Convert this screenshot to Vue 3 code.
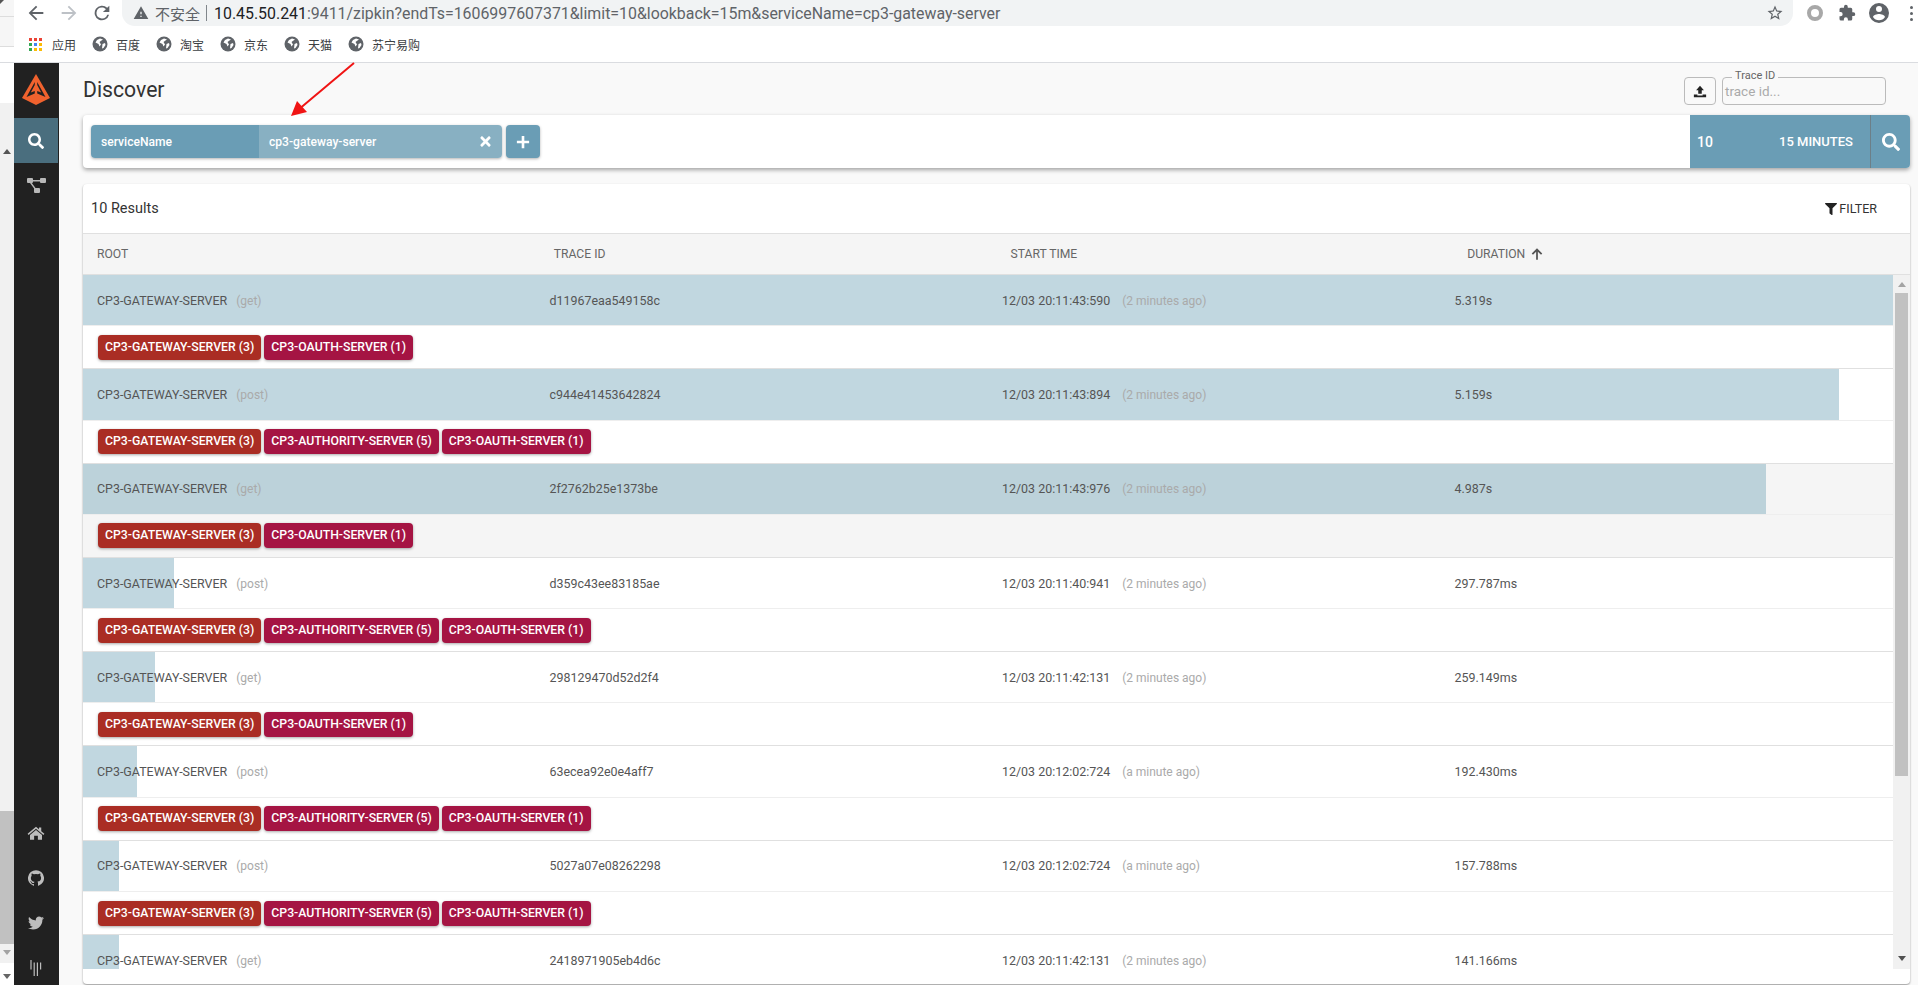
<template>
  <div class="page">
    <div class="other-window-top"><span class="owt-corner"></span></div>

    <header class="toolbar">
      <svg class="nav-icon" viewBox="0 0 24 24"><path d="M20 11H7.800l5.600-5.600L12 4l-8 8 8 8 1.400-1.400L7.800 13H20z" /></svg>
      <svg class="nav-icon is-off" viewBox="0 0 24 24"><path d="M4 11h12.200l-5.600-5.600L12 4l8 8-8 8-1.400-1.400 5.600-5.600H4z" /></svg>
      <svg class="nav-icon" viewBox="0 0 24 24"><path d="M17.650 6.350A8 8 0 1 0 19.730 14h-2.080A6 6 0 1 1 12 6c1.660 0 3.140.69 4.220 1.780L13 11h7V4z" /></svg>
      <div class="address">
        <svg class="warn" viewBox="0 0 24 24"><path d="M1 21h22L12 2zm12-3h-2v-2h2zm0-4h-2v-4h2z" /></svg>
        <span class="insecure">不安全</span>
        <span class="pipe"></span>
        <span class="url"><b>10.45.50.241</b>:9411/zipkin?endTs=1606997607371&amp;limit=10&amp;lookback=15m&amp;serviceName=cp3-gateway-server</span>
        <svg class="star" viewBox="0 0 24 24"><path d="M22 9.240l-7.190-.62L12 2 9.190 8.630 2 9.240l5.460 4.730L5.820 21 12 17.270 18.180 21l-1.630-7.030zM12 15.400l-3.760 2.270 1-4.280-3.320-2.880 4.380-.38L12 6.100l1.710 4.040 4.380.38-3.320 2.880 1 4.280z" /></svg>
      </div>
      <span class="ring"></span>
      <svg class="ext" viewBox="0 0 24 24"><path d="M20.500 11H19V7a2 2 0 0 0-2-2h-4V3.500a2.500 2.500 0 0 0-5 0V5H4a2 2 0 0 0-2 2v3.800h1.500a2.700 2.700 0 0 1 0 5.400H2V20a2 2 0 0 0 2 2h3.800v-1.500a2.700 2.700 0 0 1 5.400 0V22H17a2 2 0 0 0 2-2v-4h1.500a2.500 2.500 0 0 0 0-5z" /></svg>
      <svg class="avatar" viewBox="0 0 24 24"><path d="M12 2a10 10 0 1 0 0 20 10 10 0 0 0 0-20zm0 3a3 3 0 1 1 0 6 3 3 0 0 1 0-6zm0 14.200a7.200 7.200 0 0 1-6-3.200c0-2 4-3.100 6-3.100s6 1.100 6 3.100a7.200 7.200 0 0 1-6 3.200z" /></svg>
      <span class="dots"><i></i><i></i><i></i></span>
    </header>

    <nav class="bookmarks">
      <span class="apps">
        <i v-for="(c, i) in appColors" :key="i" :style="{ background: c }"></i>
      </span>
      <span class="apps-label">应用</span>
      <span v-for="b in bookmarks" :key="b" class="bookmark">
        <svg class="globe" viewBox="0 0 16 16">
          <circle cx="8" cy="8" r="7.500" fill="#5f6368" />
          <path d="M8 2.500 5 4l-1.500 2.500L6.500 8l1 2.500 1.500-2L7.500 6l2-1.500L11 3.500zM10.500 8l2.500-1 .5 2-2 3-1.500.5z" fill="#fff" />
        </svg>
        {{ b }}
      </span>
    </nav>

    <div class="body">
      <div class="other-window">
        <div class="ow-mid"></div>
        <div class="ow-track">
          <span class="ow-up"></span>
          <span class="ow-thumb"></span>
          <span class="ow-down"></span>
        </div>
        <div class="ow-foot"><span class="ow-down"></span></div>
      </div>

      <aside class="sidebar">
        <svg class="logo" viewBox="0 0 28 31">
          <path d="M14 0 28 24 14 31 0 24z" fill="#f0622e" />
          <path d="M12.800 8 4.500 23l8.300-3.500V17l-4 1.600 4-7.500zM15.200 8l8.300 15-8.300-3.500V17l4 1.600-4-7.500z" fill="#212121" />
        </svg>
        <div class="side-item is-active">
          <svg class="side-icon is-white" viewBox="0 0 512 512"><path :d="searchPath" /></svg>
        </div>
        <div class="side-item">
          <svg class="side-graph" viewBox="0 0 19 15"><path d="M0 1a1 1 0 0 1 1-1h4a1 1 0 0 1 1 1v1h7V1a1 1 0 0 1 1-1h4a1 1 0 0 1 1 1v3a1 1 0 0 1-1 1h-4a1 1 0 0 1-1-1V3.500H6V4a1 1 0 0 1-1 1h-.2L8.500 10H12a1 1 0 0 1 1 1v3a1 1 0 0 1-1 1H8a1 1 0 0 1-1-1v-3l.1-.4L3 5H1a1 1 0 0 1-1-1z" /></svg>
        </div>
        <div class="side-bottom">
          <div class="side-item">
            <svg class="side-home" viewBox="0 0 24 24"><path d="M12 3.500.8 13l1.300 1.500L12 6.200l9.900 8.300 1.300-1.500-4.200-3.500V4.500h-3v2.400zM12 8 4 14.600V21h5.500v-5.500h5V21H20v-6.400z" /></svg>
          </div>
          <div class="side-item">
            <svg class="side-icon" viewBox="0 0 24 24"><path d="M12 .3a12 12 0 0 0-3.800 23.400c.6.100.8-.3.8-.6v-2c-3.300.7-4-1.600-4-1.600-.6-1.400-1.400-1.800-1.400-1.800-1-.7.100-.7.100-.7 1.200 0 1.900 1.200 1.900 1.200 1 1.800 2.800 1.300 3.500 1 0-.8.400-1.300.7-1.600-2.700-.3-5.500-1.300-5.500-6 0-1.200.5-2.300 1.300-3.100-.2-.4-.6-1.600 0-3.200 0 0 1-.3 3.400 1.200a11.500 11.500 0 0 1 6 0c2.300-1.500 3.300-1.200 3.300-1.200.6 1.600.2 2.800 0 3.200.9.800 1.300 1.900 1.300 3.200 0 4.600-2.800 5.600-5.500 5.900.5.400.9 1 .9 2.200v3.300c0 .3.100.7.8.6A12 12 0 0 0 12 .3" /></svg>
          </div>
          <div class="side-item">
            <svg class="side-icon" viewBox="0 0 24 24"><path d="M23.954 4.569c-.885.389-1.830.654-2.825.775 1.014-.611 1.794-1.574 2.163-2.723-.951.555-2.005.959-3.127 1.184-.896-.959-2.173-1.559-3.591-1.559-2.717 0-4.920 2.203-4.920 4.917 0 .39.045.765.127 1.124C7.691 8.094 4.066 6.130 1.640 3.161c-.427.722-.666 1.561-.666 2.475 0 1.710.87 3.213 2.188 4.096-.807-.026-1.566-.248-2.228-.616v.061c0 2.385 1.693 4.374 3.946 4.827-.413.111-.849.171-1.296.171-.314 0-.615-.03-.916-.086.631 1.953 2.445 3.377 4.604 3.417-1.680 1.319-3.809 2.105-6.102 2.105-.39 0-.779-.023-1.170-.067 2.189 1.394 4.768 2.209 7.557 2.209 9.054 0 13.999-7.496 13.999-13.986 0-.209 0-.42-.015-.63.961-.689 1.800-1.560 2.460-2.548z" /></svg>
          </div>
          <div class="side-item">
            <svg class="side-icon" viewBox="0 0 16 20"><path d="M1 0h1.500v12H1zM5 3h1.500v17H5zM9 3h1.500v17H9zM13 3h1.500v9H13z" /></svg>
          </div>
        </div>
      </aside>

      <main class="main">
        <div class="title-row">
          <h1 class="title">Discover</h1>
          <button type="button" class="upload">
            <svg viewBox="0 0 16 16"><path d="M8 2 3.500 7H6v4h4V7h2.500zM1 12h4v1h6v-1h4v3H1z" /></svg>
          </button>
          <label class="trace-field">
            <span class="trace-legend">Trace ID</span>
            <span class="trace-input">trace id...</span>
          </label>
        </div>

        <section class="search-bar">
          <div class="chip">
            <span class="chip-key">serviceName</span>
            <span class="chip-value">
              cp3-gateway-server
              <svg class="chip-x" viewBox="0 0 352 512"><path d="M242.720 256l100.070-100.070c12.280-12.280 12.280-32.190 0-44.480l-22.240-22.240c-12.280-12.280-32.190-12.280-44.480 0L176 189.280 75.930 89.210c-12.280-12.280-32.190-12.280-44.480 0L9.210 111.450c-12.280 12.280-12.280 32.190 0 44.480L109.280 256 9.210 356.070c-12.280 12.280-12.280 32.190 0 44.480l22.240 22.240c12.280 12.280 32.200 12.280 44.480 0L176 322.720l100.070 100.070c12.280 12.280 32.200 12.280 44.480 0l22.240-22.240c12.280-12.280 12.280-32.190 0-44.480L242.720 256z" /></svg>
            </span>
          </div>
          <button type="button" class="add">
            <svg viewBox="0 0 16 16"><path d="M6.500 1h3v5.500H15v3H9.500V15h-3V9.500H1v-3h5.500z" /></svg>
          </button>
          <div class="range">
            <span class="limit">10</span>
            <span class="lookback">15 MINUTES</span>
          </div>
          <button type="button" class="go">
            <svg viewBox="0 0 512 512"><path :d="searchPath" /></svg>
          </button>
        </section>

        <section class="card">
          <div class="card-head">
            <span class="results">10 Results</span>
            <span class="filter">
              <svg viewBox="0 0 512 512"><path d="M487.976 0H24.028C2.710 0-8.047 25.866 7.058 40.971L192 225.941V432c0 7.831 3.821 15.170 10.237 19.662l80 55.980C298.020 518.690 320 507.493 320 487.980V225.941l184.947-184.970C520.021 25.896 509.338 0 487.976 0z" /></svg>
              FILTER
            </span>
          </div>
          <div class="thead">
            <span>ROOT</span>
            <span>TRACE ID</span>
            <span>START TIME</span>
            <span class="sorted">
              DURATION
              <svg viewBox="0 0 16 16"><path d="M8 1.500 2 7.500l1.400 1.400L7 5.400V14.500h2V5.400l3.600 3.500L14 7.500z" /></svg>
            </span>
          </div>
          <div class="tbody-wrap">
            <div class="tbody">
              <template v-for="(t, i) in traces" :key="t.id">
                <div class="trow" :class="{ 'is-hover': i === 2 }">
                  <span class="bar" :style="{ width: t.pct + '%' }"></span>
                  <span class="cell">CP3-GATEWAY-SERVER<em>({{ t.method }})</em></span>
                  <span class="cell">{{ t.id }}</span>
                  <span class="cell">{{ t.start }}<em class="is-ago">({{ t.ago }})</em></span>
                  <span class="cell">{{ t.duration }}</span>
                </div>
                <div v-if="i < traces.length - 1" class="tags" :class="{ 'is-hover': i === 2 }">
                  <span class="tag is-gateway">CP3-GATEWAY-SERVER (3)</span>
                  <span v-if="t.auth" class="tag">CP3-AUTHORITY-SERVER (5)</span>
                  <span class="tag">CP3-OAUTH-SERVER (1)</span>
                </div>
              </template>
            </div>
            <div class="scrollbar">
              <span class="sb-up"></span>
              <span class="sb-thumb"></span>
              <span class="sb-down"></span>
            </div>
          </div>
        </section>
      </main>
    </div>

    <svg class="red-arrow" viewBox="0 0 80 70">
      <path d="M68 1 12 48" stroke="#f01414" stroke-width="2" fill="none" />
      <path d="M5 54 11 39 21 50z" fill="#f01414" />
    </svg>
  </div>
</template>

<script setup>
const searchPath = 'M505 442.700L405.300 343c-4.500-4.500-10.600-7-17-7H372c27.600-35.300 44-79.700 44-128C416 93.100 322.900 0 208 0S0 93.100 0 208s93.100 208 208 208c48.300 0 92.700-16.400 128-44v16.300c0 6.400 2.500 12.500 7 17l99.700 99.700c9.400 9.400 24.600 9.400 33.900 0l28.300-28.300c9.400-9.400 9.400-24.600.1-34zM208 336c-70.700 0-128-57.200-128-128 0-70.700 57.200-128 128-128 70.700 0 128 57.200 128 128 0 70.700-57.200 128-128 128z'

const appColors = [
  '#ea4335', '#ea4335', '#ea4335',
  '#34a853', '#4285f4', '#fbbc05',
  '#34a853', '#fbbc05', '#fbbc05',
]

const bookmarks = ['百度', '淘宝', '京东', '天猫', '苏宁易购']

const traces = [
  { id: 'd11967eaa549158c', method: 'get', start: '12/03 20:11:43:590', ago: '2 minutes ago', duration: '5.319s', pct: 100, auth: false },
  { id: 'c944e41453642824', method: 'post', start: '12/03 20:11:43:894', ago: '2 minutes ago', duration: '5.159s', pct: 97, auth: true },
  { id: '2f2762b25e1373be', method: 'get', start: '12/03 20:11:43:976', ago: '2 minutes ago', duration: '4.987s', pct: 93, auth: false },
  { id: 'd359c43ee83185ae', method: 'post', start: '12/03 20:11:40:941', ago: '2 minutes ago', duration: '297.787ms', pct: 5, auth: true },
  { id: '298129470d52d2f4', method: 'get', start: '12/03 20:11:42:131', ago: '2 minutes ago', duration: '259.149ms', pct: 4, auth: false },
  { id: '63ecea92e0e4aff7', method: 'post', start: '12/03 20:12:02:724', ago: 'a minute ago', duration: '192.430ms', pct: 3, auth: true },
  { id: '5027a07e08262298', method: 'post', start: '12/03 20:12:02:724', ago: 'a minute ago', duration: '157.788ms', pct: 2, auth: true },
  { id: '2418971905eb4d6c', method: 'get', start: '12/03 20:11:42:131', ago: '2 minutes ago', duration: '141.166ms', pct: 2, auth: false },
]
</script>

<style>
html, body {
  margin: 0;
  background: #fff;
  overflow: hidden;
}
</style>

<style scoped>
.page {
  position: relative;
  display: flex;
  flex-direction: column;
  width: 1918px;
  height: 985px;
  overflow: hidden;
  font-family: Roboto, "Noto Sans CJK SC", sans-serif;
  color: #333;
}

.other-window-top {
  position: absolute;
  top: 0;
  left: 0;
  width: 14px;
  height: 46px;
  border-bottom: 1px solid #ddd;
  background: linear-gradient(#f6f6f6 16px, #ddd 16px, #ddd 17px, #f6f6f6 17px);
}

.owt-corner {
  position: absolute;
  top: 0;
  left: 0;
  border-top: 4px solid #555;
  border-right: 4px solid transparent;
}

.toolbar {
  display: flex;
  align-items: center;
  height: 26px;
  padding-left: 25px;
  flex: none;
}

.nav-icon {
  width: 22px;
  height: 22px;
  margin-right: 11px;
  fill: #5f6368;
}

.nav-icon.is-off {
  fill: #bdc1c6;
}

.address {
  display: flex;
  align-items: center;
  width: 1671px;
  height: 26px;
  margin-left: -2px;
  padding-left: 11px;
  box-sizing: border-box;
  border-radius: 0 0 13px 13px;
  background: #f1f3f4;
  color: #5f6368;
  font-size: 15.900px;
}

.warn {
  width: 16px;
  height: 16px;
  margin-right: 6px;
  fill: #5f6368;
}

.insecure {
  font-size: 15px;
}

.pipe {
  width: 1px;
  height: 16px;
  margin: 0 7px 0 6px;
  background: #80868b;
}

.url b {
  color: #202124;
  font-weight: 400;
}

.star {
  width: 18px;
  height: 18px;
  margin-left: auto;
  margin-right: 9px;
  fill: #5f6368;
}

.ring {
  width: 8px;
  height: 8px;
  margin-left: 14px;
  border: 4px solid #a8a8a8;
  border-radius: 50%;
}

.ext {
  width: 18px;
  height: 18px;
  margin-left: 15px;
  fill: #5f6368;
}

.avatar {
  width: 24px;
  height: 24px;
  margin-left: 11px;
  fill: #5f6368;
}

.dots {
  display: flex;
  flex-direction: column;
  gap: 3px;
  margin-left: 19px;
}

.dots i {
  width: 3px;
  height: 3px;
  border-radius: 50%;
  background: #5f6368;
}

.bookmarks {
  display: flex;
  align-items: center;
  height: 36px;
  padding-left: 29px;
  flex: none;
  border-bottom: 1px solid #dadce0;
  color: #3c4043;
  font-size: 12px;
}

.apps {
  display: grid;
  grid-template-columns: repeat(3, 3px);
  grid-auto-rows: 3px;
  gap: 2px;
  width: 13px;
}

.apps i {
  display: block;
}

.apps-label {
  margin-left: 10px;
  margin-right: 16px;
}

.bookmark {
  display: flex;
  align-items: center;
  gap: 8px;
  margin-right: 16px;
}

.globe {
  width: 16px;
  height: 16px;
}

.body {
  display: flex;
  flex: 1;
  min-height: 0;
}

.other-window {
  display: flex;
  flex-direction: column;
  width: 14px;
  flex: none;
}

.ow-mid {
  height: 40px;
  background: #fff;
}

.ow-track {
  display: flex;
  flex-direction: column;
  align-items: center;
  flex: 1;
  background: #f1f1f1;
}

.ow-up {
  margin-top: 46px;
  border: 4px solid transparent;
  border-top: 0;
  border-bottom: 5px solid #555;
}

.ow-thumb {
  width: 14px;
  height: 133px;
  margin-top: 657px;
  background: #c1c1c1;
}

.ow-down {
  margin-top: 6px;
  border: 4px solid transparent;
  border-bottom: 0;
  border-top: 5px solid #a3a3a3;
}

.ow-foot {
  display: flex;
  justify-content: center;
  height: 22px;
  background: #fff;
}

.ow-foot .ow-down {
  margin-top: 11px;
  border-top-color: #666;
}

.sidebar {
  display: flex;
  flex-direction: column;
  width: 45px;
  flex: none;
  background: #212121;
}

.logo {
  width: 28px;
  height: 31px;
  margin: 11px 0 13px 8px;
}

.side-item {
  display: flex;
  align-items: center;
  justify-content: center;
  width: 44px;
  height: 45px;
  flex: none;
}

.side-item.is-active {
  background: #4a6e7e;
}

.side-icon {
  width: 16px;
  height: 16px;
  fill: #bdbdbd;
}

.side-icon.is-white {
  fill: #fff;
}

.side-graph {
  width: 19px;
  height: 15px;
  fill: #b8b8b8;
}

.side-home {
  width: 18px;
  height: 18px;
  fill: #bdbdbd;
}

.side-bottom {
  display: flex;
  flex-direction: column;
  margin-top: auto;
  margin-bottom: -5px;
}

.main {
  display: flex;
  flex-direction: column;
  flex: 1;
  min-width: 0;
  padding: 0 8px 1px 24px;
  background: #f9f9f9;
}

.title-row {
  display: flex;
  align-items: center;
  height: 52px;
  flex: none;
}

.title {
  margin: 0 auto 0 0;
  color: #333;
  font-size: 21.200px;
  font-weight: 400;
}

.upload {
  display: flex;
  align-items: center;
  justify-content: center;
  width: 32px;
  height: 28px;
  margin-top: 3px;
  padding: 0;
  border: 1px solid #bbb;
  border-radius: 4px;
  background: transparent;
}

.upload svg {
  width: 14px;
  height: 14px;
  fill: #222;
}

.trace-field {
  position: relative;
  width: 164px;
  height: 28px;
  box-sizing: border-box;
  margin: 3px 24px 0 6px;
  padding-left: 2px;
  border: 1px solid #bbb;
  border-radius: 4px;
  line-height: 26px;
}

.trace-legend {
  position: absolute;
  top: -8px;
  left: 9px;
  padding: 0 3px;
  background: #f9f9f9;
  color: #666;
  font-size: 11px;
  line-height: 12px;
}

.trace-input {
  color: #aaa;
  font-size: 13.500px;
}

.search-bar {
  display: flex;
  align-items: center;
  height: 53px;
  flex: none;
  padding-left: 8px;
  border-radius: 4px;
  background: #fff;
  box-shadow: 0 2px 4px rgba(0, 0, 0, .35);
}

.chip {
  display: flex;
  width: 411px;
  height: 33px;
  overflow: hidden;
  border-radius: 4px;
  color: #fff;
  font-size: 12.100px;
  font-weight: 500;
  line-height: 35px;
  box-shadow: 0 1px 3px rgba(0, 0, 0, .3);
}

.chip-key {
  width: 158px;
  padding-left: 10px;
  background: #6a9db5;
}

.chip-value {
  position: relative;
  flex: 1;
  padding-left: 10px;
  background: #88b0c2;
}

.chip-x {
  position: absolute;
  top: 9px;
  right: 10px;
  width: 13px;
  height: 15px;
  fill: #fff;
}

.add {
  display: flex;
  align-items: center;
  justify-content: center;
  width: 34px;
  height: 33px;
  margin-left: 4px;
  padding: 0;
  border: 0;
  border-radius: 4px;
  background: #6a9db5;
  box-shadow: 0 1px 3px rgba(0, 0, 0, .3);
}

.add svg {
  width: 14px;
  height: 14px;
  fill: #fff;
}

.range {
  display: flex;
  align-items: center;
  justify-content: space-between;
  width: 180px;
  height: 53px;
  box-sizing: border-box;
  margin-left: auto;
  padding: 0 17px 0 7px;
  background: #6a9db5;
  color: #fff;
  font-size: 13px;
  font-weight: 500;
}

.limit {
  font-size: 14px;
}

.go {
  display: flex;
  align-items: center;
  justify-content: center;
  width: 40px;
  height: 53px;
  padding: 0;
  border: 0;
  border-left: 1px solid #6c7f88;
  border-radius: 0 4px 4px 0;
  background: #6a9db5;
}

.go svg {
  width: 18px;
  height: 18px;
  fill: #fff;
}

.card {
  display: flex;
  flex-direction: column;
  flex: 1;
  min-height: 0;
  margin-top: 16px;
  border-radius: 4px;
  background: #fff;
  box-shadow: 0 1px 2px rgba(0, 0, 0, .4);
}

.card-head {
  display: flex;
  align-items: center;
  justify-content: space-between;
  height: 49px;
  flex: none;
  padding: 0 33px 0 8px;
}

.results {
  font-size: 14.500px;
}

.filter {
  display: flex;
  align-items: center;
  gap: 2px;
  color: #333;
  font-size: 12.500px;
}

.filter svg {
  width: 12px;
  height: 12px;
  fill: #222;
}

.thead {
  display: grid;
  grid-template-columns: repeat(4, 1fr);
  align-items: center;
  height: 40px;
  flex: none;
  border-top: 1px solid #e0e0e0;
  border-bottom: 1px solid #e0e0e0;
  background: #f5f5f5;
  color: #666;
  font-size: 12.150px;
}

.thead span {
  padding-left: 14px;
}

.thead .sorted {
  display: flex;
  align-items: center;
  gap: 5px;
}

.sorted svg {
  width: 14px;
  height: 14px;
  fill: #555;
}

.tbody-wrap {
  display: flex;
  height: 694px;
  flex: none;
  overflow: hidden;
}

.tbody {
  flex: 1;
  min-width: 0;
}

.trow {
  position: relative;
  display: grid;
  grid-template-columns: repeat(4, 1fr);
  align-items: center;
  height: 51.300px;
  box-sizing: border-box;
  border-bottom: 1px solid #eee;
  color: #555;
  font-size: 12.450px;
}

.bar {
  position: absolute;
  top: 0;
  bottom: 0;
  left: 0;
  background: #c1d7e0;
}

.is-hover {
  background: #f5f5f5;
}

.is-hover .bar {
  background: #bcd2da;
}

.cell {
  position: relative;
  padding-left: 14px;
}

.cell em {
  margin-left: 9px;
  color: #aaa;
  font-size: 12px;
  font-style: normal;
}

.cell em.is-ago {
  margin-left: 12px;
}

.tags {
  display: flex;
  align-items: center;
  gap: 3px;
  height: 43px;
  box-sizing: border-box;
  padding-left: 15px;
  border-bottom: 1px solid #e0e0e0;
}

.tag {
  height: 25px;
  padding: 0 7px;
  border-radius: 4px;
  background: #a51443;
  color: #fff;
  font-size: 12.280px;
  font-weight: 500;
  line-height: 25px;
  box-shadow: 0 1px 3px rgba(0, 0, 0, .35);
}

.tag.is-gateway {
  background: #aa2d24;
}

.scrollbar {
  display: flex;
  flex-direction: column;
  align-items: center;
  width: 17px;
  flex: none;
  background: #f1f1f1;
}

.sb-up {
  margin-top: 7px;
  border: 4px solid transparent;
  border-top: 0;
  border-bottom: 5px solid #a3a3a3;
}

.sb-thumb {
  width: 13px;
  height: 483px;
  margin-top: 6px;
  background: #c1c1c1;
}

.sb-down {
  margin-top: 180px;
  border: 4px solid transparent;
  border-bottom: 0;
  border-top: 5px solid #505050;
}

.red-arrow {
  position: absolute;
  top: 62px;
  left: 286px;
  width: 80px;
  height: 70px;
}
</style>
